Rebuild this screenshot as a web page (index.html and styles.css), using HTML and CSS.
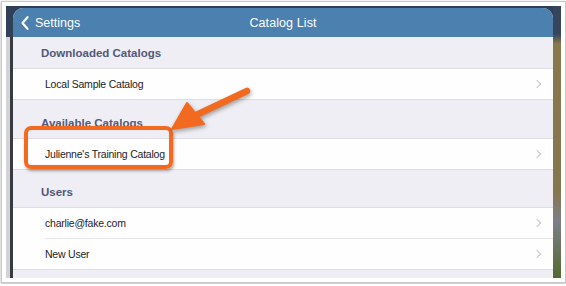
FILE: index.html
```html
<!DOCTYPE html>
<html lang="en">
<head>
  <meta charset="UTF-8" />
  <meta name="viewport" content="width=device-width, initial-scale=1.0"/>
  <title>Catalog List</title>
  <link rel="stylesheet" href="styles.css">
</head>
<body>

  <div class="frame">
    <div class="shot">
      <div class="bg-left"></div>

      <div class="modal">
        <header class="navbar">
          <a class="back">
            <svg width="8" height="14" viewBox="0 0 8 14"><polyline points="6.5,1.2 1.5,7 6.5,12.8" fill="none" stroke="#fff" stroke-width="2.2" stroke-linecap="round" stroke-linejoin="round"/></svg>
            Settings
          </a>
          <h1>Catalog List</h1>
          <span></span>
        </header>

        <div class="section-title first">Downloaded Catalogs</div>
        <ul class="group">
          <li>Local Sample Catalog <i class="chev"></i></li>
        </ul>

        <div class="section-title">Available Catalogs</div>
        <ul class="group">
          <li>Julienne's Training Catalog <i class="chev"></i></li>
        </ul>

        <div class="section-title users">Users</div>
        <ul class="group">
          <li>charlie@fake.com <i class="chev"></i></li>
          <li>New User <i class="chev"></i></li>
        </ul>
      </div>

      <div class="bg-right"></div>
    </div>

    <!-- annotation -->
    <div class="callout-box"></div>
    <svg class="callout-arrow" width="566" height="286" viewBox="0 0 566 286">
      <line x1="247" y1="91" x2="194" y2="116" stroke="#f26a1f" stroke-width="6.5" stroke-linecap="round"/>
      <polygon points="172,129 187,103 204,124" fill="#f26a1f" stroke="#f26a1f" stroke-width="2" stroke-linejoin="round"/>
    </svg>
  </div>

</body>
</html>
```

FILE: styles.css
```css
body {
  margin: 0;
  background: #fff;
  font-family: 'Liberation Sans', Arial, sans-serif;
}

.frame {
  position: relative;
  width: 555px;
  height: 272px;
  margin: 1px;
  padding: 4px;
  background: #fff;
  border: 1px solid #c9c9c9;
  box-shadow: 0 1px 3px rgba(0, 0, 0, 0.3);
}

.shot {
  display: flex;
  height: 100%;
  overflow: hidden;
  background: #2f3f55;
}

.bg-left {
  width: 7px;
  background:
    linear-gradient(#2f4058, #2f4058) top / 100% 31px no-repeat,
    linear-gradient(to right, #d3d4d7 0 4px, #3a3b40 4px 100%);
}

.bg-right {
  width: 8px;
  background: linear-gradient(to bottom, #34455c 0 28px, #8a784c 38px, #86764d 185px, #7b7f87 215px, #607049 255px, #4e6a30 100%);
}

.modal {
  width: 540px;
  margin-top: 2px;
  background: #efeef4;
  border-radius: 10px 10px 0 0;
  overflow: hidden;
}

/* NAV BAR */
.navbar {
  height: 29px;
  background: #4b80af;
  color: #fff;
  display: grid;
  grid-template-columns: 1fr auto 1fr;
  align-items: center;
}

.back {
  display: flex;
  align-items: center;
  gap: 6px;
  padding-left: 8px;
  font-size: 12.5px;
}

.navbar h1 {
  margin: 0;
  font-size: 12.5px;
  font-weight: normal;
  letter-spacing: 0.1px;
}

/* SECTIONS */
.section-title {
  padding: 16px 0 8px 28px;
  line-height: 14px;
  font-size: 11.5px;
  font-weight: bold;
  color: #52587a;
}

.section-title.first {
  padding-top: 9px;
}

.section-title.users {
  padding-top: 15px;
}

.group {
  list-style: none;
  margin: 0;
  padding: 0;
  background: #fefeff;
  border-top: 1px solid #dedde3;
  border-bottom: 1px solid #dedde3;
}

.group li {
  height: 30px;
  display: flex;
  align-items: center;
  justify-content: space-between;
  padding: 0 11px 0 32px;
  font-size: 10.5px;
  letter-spacing: -0.22px;
  color: #1c1c1e;
}

.group li + li {
  border-top: 1px solid #e6e5ea;
  margin-left: 32px;
  padding-left: 0;
}

.chev {
  width: 5px;
  height: 5px;
  margin-right: 2px;
  border-top: 1.3px solid #c6c6cb;
  border-right: 1.3px solid #c6c6cb;
  transform: rotate(45deg);
}

/* ANNOTATION */
.callout-box {
  position: absolute;
  left: 22px;
  top: 124px;
  width: 141px;
  height: 35px;
  border: 4px solid #f26a1f;
  border-radius: 7px;
  box-shadow: 1px 2px 3px rgba(0, 0, 0, 0.35), inset 0 0 1px rgba(0, 0, 0, 0.2);
}

.callout-arrow {
  position: absolute;
  left: -2px;
  top: -2px;
  filter: drop-shadow(1px 2px 2px rgba(0, 0, 0, 0.35));
}
```
